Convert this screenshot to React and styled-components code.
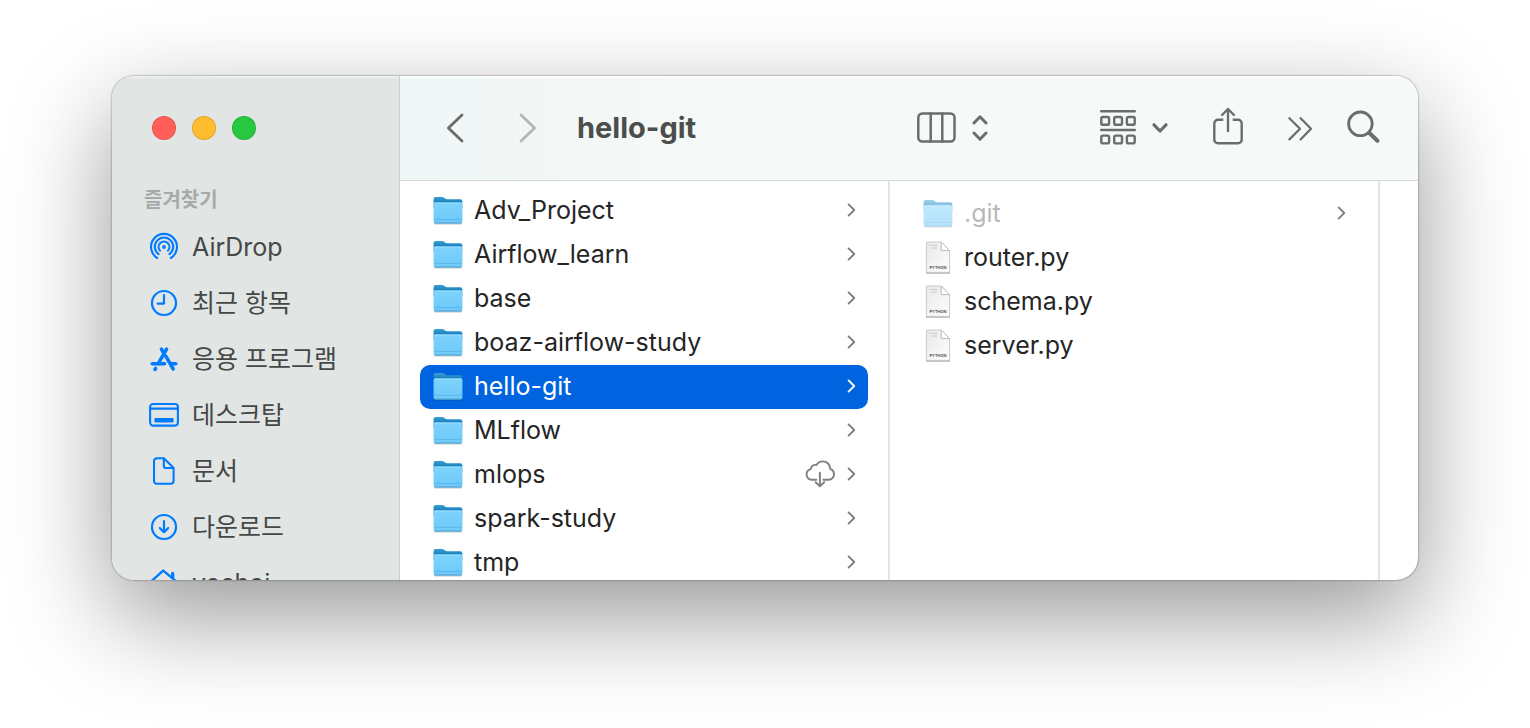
import React from "react";
import styled, { createGlobalStyle } from "styled-components";

const GlobalStyle = createGlobalStyle`
  *, *::before, *::after { box-sizing: border-box; }
  body {
    margin: 0;
    background: #fff;
    font-family: Inter, "Noto Sans CJK KR", sans-serif;
    -webkit-font-smoothing: antialiased;
  }
  button { font: inherit; color: inherit; background: none; border: 0; padding: 0; margin: 0; }
  ul { list-style: none; margin: 0; padding: 0; }
  h1, h2 { margin: 0; }
  svg { display: block; flex: none; }
`;

const Desktop = styled.div`
  height: 100vh;
  padding: 76px 112px 148px;
  overflow: hidden;
`;

const Window = styled.main`
  display: grid;
  grid-template-columns: 288px minmax(0, 1fr);
  height: 100%;
  border-radius: 22px;
  overflow: hidden;
  background: #fff;
  box-shadow: 0 0 2px rgba(0, 0, 0, 0.6), 0 36px 100px rgba(0, 0, 0, 0.41);
`;

const Sidebar = styled.aside`
  overflow: hidden;
  padding: 40px 24px 0 32px;
  background: #e1e6e4;
  border-right: 1px solid #c9cdcb;
  box-shadow: inset 0 2px 0 rgba(255, 255, 255, 0.35);
`;

const WindowControls = styled.div`
  display: flex;
  gap: 16px;
  padding-left: 8px;
`;

const ControlDot = styled.button`
  width: 24px;
  height: 24px;
  border-radius: 50%;
  border: 1px solid rgba(0, 0, 0, 0.12);
  background: ${(p) => p.$color};
  background-clip: border-box;
`;

const SectionTitle = styled.h2`
  margin: 44px 0 3px;
  font-size: 20px;
  line-height: 32px;
  font-weight: 700;
  color: #a6aaa8;
`;

const Place = styled.a`
  display: grid;
  grid-template-columns: 40px minmax(0, 1fr);
  column-gap: 8px;
  align-items: center;
  justify-items: start;
  height: 56px;
  font-size: 25px;
  line-height: 32px;
  color: #454847;
  text-decoration: none;
  white-space: nowrap;

  svg { justify-self: center; color: #007aff; }
`;

const Main = styled.section`
  display: flex;
  flex-direction: column;
  min-width: 0;
  min-height: 0;
`;

const Toolbar = styled.header`
  display: flex;
  align-items: center;
  flex: none;
  height: 105px;
  padding: 0 38px 1px 46px;
  background: linear-gradient(90deg, #eff7f6, #f3f7f6 180px, #f5f9f8 300px);
  border-bottom: 1px solid #d4d7d6;
  box-shadow: inset 0 2px 0 rgba(255, 255, 255, 0.7);
  color: #6a6d6c;
`;

const ToolGroup = styled.div`
  display: flex;
  align-items: center;
  gap: ${(p) => p.$gap}px;
`;

const ToolButton = styled.button`
  display: flex;
  align-items: center;
  gap: 16px;
  color: ${(p) => (p.disabled ? "#b3b7b6" : "inherit")};
`;

const Title = styled.h1`
  margin-left: 40px;
  margin-right: auto;
  font-size: 29px;
  line-height: 36px;
  font-weight: 700;
  color: #4b4e4d;
`;

const Columns = styled.div`
  display: grid;
  grid-template-columns: minmax(0, 1fr) minmax(0, 1fr) 38px;
  flex: 1;
  min-height: 0;
`;

const Column = styled.div`
  overflow: hidden;
  padding: 0 20px;
  border-right: 2px solid #e5e5e5;
`;

const FileList = styled.ul`
  margin-top: ${(p) => p.$top}px;
`;

const FileRow = styled.li`
  display: flex;
  align-items: center;
  height: 44px;
  padding: 0 12px 2px 13px;
  border-radius: 10px;
  background: ${(p) => (p.$selected ? "#0064e1" : "transparent")};
  color: ${(p) => (p.$selected ? "#fff" : p.$hidden ? "#b9b9b9" : "#252525")};
`;

const FileName = styled.span`
  flex: 1;
  min-width: 0;
  margin-left: 11px;
  font-size: 25px;
  line-height: 32px;
  white-space: nowrap;
`;

const RowMark = styled.span`
  color: ${(p) => (p.$selected ? "#fff" : "#7f7f7f")};
  margin-left: 11px;
`;

const Line = ({ w, h, sw = 2.5, children }) => (
  <svg
    width={w}
    height={h}
    viewBox={`0 0 ${w} ${h}`}
    fill="none"
    stroke="currentColor"
    strokeWidth={sw}
    strokeLinecap="round"
    strokeLinejoin="round"
    aria-hidden="true"
  >
    {children}
  </svg>
);

const AirDropIcon = () => (
  <Line w={30} h={30} sw={2.1}>
    <path d="M8.2 26A13 13 0 1 1 21.8 26" />
    <path d="M9.6 22.2A9.2 9.2 0 1 1 20.4 22.2" />
    <path d="M11 18.6A5.4 5.4 0 1 1 19 18.6" />
    <circle cx="15" cy="15" r="1.9" fill="currentColor" stroke="none" />
  </Line>
);

const ClockIcon = () => (
  <Line w={28} h={28} sw={2.2}>
    <circle cx="14" cy="14" r="12" />
    <path d="M14 6v8.6H7.6" />
  </Line>
);

const AppsIcon = () => (
  <Line w={28} h={26} sw={3.5}>
    <path d="M2.2 17.8H14.6" />
    <path d="M21.4 17.8h4.4" />
    <path d="M16.6 3.2 8.2 17.6" />
    <path d="M11.4 3.2l2.6 4.4" />
    <path d="M15.8 10.2 23.2 23" />
    <path d="M5.6 22.4l-.7 1" />
  </Line>
);

const DesktopIcon = () => (
  <Line w={30} h={26} sw={2.1}>
    <rect x="1.1" y="2" width="27.8" height="21.6" rx="3" />
    <path d="M1 6.6h28" />
    <rect x="5.4" y="16" width="19.2" height="4.4" rx="1" fill="currentColor" stroke="none" />
  </Line>
);

const DocumentIcon = () => (
  <Line w={22} h={28} sw={2.1}>
    <path d="M4 1.2h6.8L20.6 11v12.8a3 3 0 0 1-3 3H4a3 3 0 0 1-3-3V4.2a3 3 0 0 1 3-3Z" />
    <path d="M10.8 1.5v7.2a2.3 2.3 0 0 0 2.3 2.3h7.1" />
  </Line>
);

const DownloadIcon = () => (
  <Line w={28} h={28} sw={2.2}>
    <circle cx="14" cy="14" r="12" />
    <path d="M14 8.2v10.6M9.8 15l4.2 4.2 4.2-4.2" />
  </Line>
);

const HomeIcon = () => (
  <Line w={30} h={28} sw={2.4}>
    <path d="M1.5 13 14.2 1.6 28 13" />
    <path d="M23.7 8.4V4.4" strokeWidth="3.2" />
    <path d="M5 12v12.5h20V12" />
  </Line>
);

const BackIcon = () => (
  <Line w={18} h={30} sw={2.8}>
    <path d="M16 2 2.4 15 16 28" />
  </Line>
);

const ForwardIcon = () => (
  <Line w={18} h={30} sw={2.8}>
    <path d="M2 2 15.6 15 2 28" />
  </Line>
);

const ColumnsIcon = () => (
  <Line w={39} h={31} sw={2.5}>
    <rect x="1.3" y="1.5" width="36.2" height="28" rx="4" />
    <path d="M13.7 1.5v28M25.3 1.5v28" />
  </Line>
);

const UpDownIcon = () => (
  <Line w={16} h={28} sw={3}>
    <path d="M2 9 8 2.8 14 9M2 19l6 6.2 6-6.2" />
  </Line>
);

const GroupIcon = () => (
  <Line w={36} h={38} sw={2.4}>
    <path d="M1.2 2.3h33.6M1.2 21h33.6" />
    {[8, 26.6].map((y) =>
      [1.3, 14.2, 26.9].map((x) => (
        <rect key={`${x}-${y}`} x={x} y={y} width="7.8" height="7.8" rx="1.6" />
      ))
    )}
  </Line>
);

const DownIcon = () => (
  <Line w={16} h={12} sw={3.2}>
    <path d="M2 2.8 8 9l6-6.2" />
  </Line>
);

const ShareIcon = () => (
  <Line w={32} h={42} sw={2.4}>
    <path d="M11.3 12.8H6a3.7 3.7 0 0 0-3.7 3.7v16A3.7 3.7 0 0 0 6 36.2h20a3.7 3.7 0 0 0 3.7-3.7v-16a3.7 3.7 0 0 0-3.7-3.7h-5.3" strokeLinecap="butt" />
    <path d="M16 24V2.2M10 8l6-6 6 6" />
  </Line>
);

const MoreIcon = () => (
  <Line w={24} h={26} sw={2.2}>
    <path d="M1.4 3.2 12 13.8 1.4 24.4M12.6 3.2 23 13.8 12.6 24.4" />
  </Line>
);

const SearchIcon = () => (
  <Line w={33} h={36} sw={2.8}>
    <circle cx="13.4" cy="13.8" r="11.8" />
    <path d="M22.4 23l8 7.8" strokeWidth="4" />
  </Line>
);

const ChevronIcon = () => (
  <Line w={10} h={14} sw={1.9}>
    <path d="M2.6 1.4 8.2 7 2.6 12.6" />
  </Line>
);

const CloudIcon = () => (
  <Line w={30} h={28} sw={1.9}>
    <path d="M11.4 19.8H6.6a5.4 5.4 0 0 1-1-10.6c.4-3 2.900-4.700 5.800-4.200 1.500-2.400 3.700-3.600 6.300-3.600 4.300 0 7.600 3.200 7.500 7.500 2.300.8 3.800 2.900 3.800 5.400 0 3-2.300 5.500-5.400 5.500h-5.200" />
    <path d="M14.900 12.600v13.200M10.600 22.200l4.300 4 4.300-4" />
  </Line>
);

const FolderIcon = ({ dim }) => (
  <svg width="30" height="29" viewBox="0 0 30 29" aria-hidden="true" opacity={dim ? 0.5 : 1}>
    <defs>
      <linearGradient id="folderFront" x1="0" y1="0" x2="0" y2="1">
        <stop offset="0" stopColor="#7fd2fc" />
        <stop offset="1" stopColor="#6ccafb" />
      </linearGradient>
      <linearGradient id="folderBack" x1="0" y1="0" x2="0" y2="1">
        <stop offset="0" stopColor="#3a9fd3" />
        <stop offset="0.5" stopColor="#1480bd" />
      </linearGradient>
    </defs>
    <rect x="1" y="25" width="28" height="3.6" rx="1.5" fill="#000" opacity="0.22" />
    <path d="M.6 3A2 2 0 0 1 2.600 1h6.600c.8 0 1.300.3 1.900.8l1 .8c.6.5 1.200.7 2 .7h13.200a2 2 0 0 1 2 2V12H.6Z" fill="url(#folderBack)" />
    <path d="M.6 8a1.600 1.600 0 0 1 1.600-1.600h25.600A1.600 1.600 0 0 1 29.400 8v17.400a2 2 0 0 1-2 2H2.600a2 2 0 0 1-2-2Z" fill="url(#folderFront)" />
    <path d="M1.400 7h27.200" stroke="#9adffe" strokeWidth="1" />
    <path d="M1 23.400h28" stroke="#5bb7e8" strokeWidth="1" />
    <path d="M1.600 27h26.800" stroke="#559fc8" strokeWidth="1" />
  </svg>
);

const PythonIcon = () => (
  <svg width="30" height="34" viewBox="0 0 30 34" aria-hidden="true">
    <defs>
      <linearGradient id="paper" x1="0" y1="0" x2="1" y2="1">
        <stop offset="0" stopColor="#e9e9e9" />
        <stop offset="1" stopColor="#fdfdfd" />
      </linearGradient>
    </defs>
    <path d="M3 32.8h24" stroke="#8c8c8c" strokeWidth="1.400" />
    <path d="M3.400 2h14.800l8.400 8.600v21.800H3.400Z" fill="url(#paper)" stroke="#cacaca" strokeWidth="1" />
    <path d="M18.200 2v8.600h8.400Z" fill="#fff" stroke="#bcbcbc" strokeWidth="1" />
    <path d="M6 5.500h1.500M8.500 5.500h6M8 8h6" stroke="#c4c4c4" strokeWidth="0.900" />
    <text x="15" y="29" textAnchor="middle" fontSize="4" fontWeight="600" fill="#444">PYTHON</text>
  </svg>
);

const places = [
  { name: "AirDrop", Icon: AirDropIcon },
  { name: "최근 항목", Icon: ClockIcon },
  { name: "응용 프로그램", Icon: AppsIcon },
  { name: "데스크탑", Icon: DesktopIcon },
  { name: "문서", Icon: DocumentIcon },
  { name: "다운로드", Icon: DownloadIcon },
  { name: "yechoi", Icon: HomeIcon },
];

const folders = [
  { name: "" },
  { name: "Adv_Project" },
  { name: "Airflow_learn" },
  { name: "base" },
  { name: "boaz-airflow-study" },
  { name: "hello-git", selected: true },
  { name: "MLflow" },
  { name: "mlops", cloud: true },
  { name: "spark-study" },
  { name: "tmp" },
];

const files = [
  { name: ".git", hidden: true },
  { name: "router.py", python: true },
  { name: "schema.py", python: true },
  { name: "server.py", python: true },
];

const Item = ({ name, selected, hidden, cloud, python }) => (
  <FileRow $selected={selected} $hidden={hidden}>
    {python ? <PythonIcon /> : <FolderIcon dim={hidden} />}
    <FileName>{name}</FileName>
    {cloud && (
      <RowMark>
        <CloudIcon />
      </RowMark>
    )}
    {!python && (
      <RowMark $selected={selected}>
        <ChevronIcon />
      </RowMark>
    )}
  </FileRow>
);

export default function App() {
  return (
    <>
      <GlobalStyle />
      <Desktop>
        <Window>
          <Sidebar>
            <WindowControls>
              <ControlDot $color="#ff5f57" aria-label="Close" />
              <ControlDot $color="#febc2e" aria-label="Minimize" />
              <ControlDot $color="#28c840" aria-label="Zoom" />
            </WindowControls>
            <SectionTitle>즐겨찾기</SectionTitle>
            <nav>
              {places.map(({ name, Icon }) => (
                <Place key={name} href="#">
                  <Icon />
                  {name}
                </Place>
              ))}
            </nav>
          </Sidebar>
          <Main>
            <Toolbar>
              <ToolGroup $gap={55}>
                <ToolButton aria-label="Back"><BackIcon /></ToolButton>
                <ToolButton aria-label="Forward" disabled><ForwardIcon /></ToolButton>
              </ToolGroup>
              <Title>hello-git</Title>
              <ToolGroup $gap={112}>
                <ToolButton aria-label="View"><ColumnsIcon /><UpDownIcon /></ToolButton>
                <ToolGroup $gap={44}>
                  <ToolButton aria-label="Group"><GroupIcon /><DownIcon /></ToolButton>
                  <ToolButton aria-label="Share"><ShareIcon /></ToolButton>
                  <ToolGroup $gap={35}>
                    <ToolButton aria-label="More"><MoreIcon /></ToolButton>
                    <ToolButton aria-label="Search"><SearchIcon /></ToolButton>
                  </ToolGroup>
                </ToolGroup>
              </ToolGroup>
            </Toolbar>
            <Columns>
              <Column>
                <FileList $top={-36}>
                  {folders.map((f) => <Item key={f.name} {...f} />)}
                </FileList>
              </Column>
              <Column>
                <FileList $top={11}>
                  {files.map((f) => <Item key={f.name} {...f} />)}
                </FileList>
              </Column>
            </Columns>
          </Main>
        </Window>
      </Desktop>
    </>
  );
}
